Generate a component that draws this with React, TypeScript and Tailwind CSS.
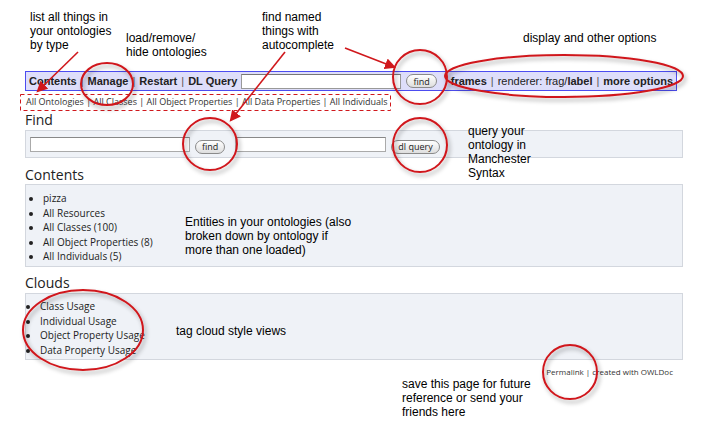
import React from "react";

const ui = { fontFamily: '"Open Sans", "DejaVu Sans", sans-serif' };
const bar = { fontFamily: '"Liberation Sans", Arial, sans-serif' };
const note = { fontFamily: '"Liberation Sans", Arial, sans-serif' };

function Sep() {
  return <span className="font-normal text-[#555] px-[4px]">|</span>;
}

function Button({ label }: { label: string }) {
  return (
    <span style={ui} className="inline-flex items-center h-[14px] px-[6px] rounded-full border border-[#8a8a8a] bg-gradient-to-b from-white to-[#dedede] text-[9px] font-normal leading-none text-[#222] whitespace-nowrap">
      {label}
    </span>
  );
}

function Box({ children, className }: { children: React.ReactNode; className?: string }) {
  return <div className={"border border-[#d3d7de] bg-[#eff2f7] " + (className || "")}>{children}</div>;
}

function Annotations() {
  return (
    <>
      <svg className="absolute inset-0 pointer-events-none" width={703} height={429}>
        <defs>
          <filter id="sh" x="-20%" y="-20%" width="150%" height="150%">
            <feDropShadow dx="2" dy="3" stdDeviation="2" floodColor="#000" floodOpacity="0.35" />
          </filter>
          <marker id="ah" viewBox="0 0 10 10" refX="8" refY="5" markerWidth="7" markerHeight="7" orient="auto">
            <path d="M0,0 L10,5 L0,10 z" fill="#d0181c" />
          </marker>
        </defs>
        {/* dashed frame round the type links */}
        <rect x="20.5" y="94.5" width="370" height="16" fill="none" stroke="#d0181c" strokeWidth="1" strokeDasharray="4 3" />
        <g fill="none" stroke="#d0181c" strokeWidth="2" filter="url(#sh)">
          <ellipse cx="107" cy="84" rx="26" ry="21" />
          <ellipse cx="420" cy="77" rx="27" ry="27" />
          <ellipse cx="564" cy="76" rx="119" ry="21" />
          <ellipse cx="210" cy="144" rx="27" ry="26" />
          <ellipse cx="420" cy="145" rx="27" ry="27" />
          <ellipse cx="83" cy="330" rx="60" ry="40" />
          <ellipse cx="570" cy="372" rx="27" ry="27" />
        </g>
        <g stroke="#d0181c" strokeWidth="1.6" markerEnd="url(#ah)">
          <line x1="78" y1="52" x2="38" y2="91" />
          <line x1="285" y1="52" x2="231" y2="120" />
          <line x1="345" y1="48" x2="394" y2="67" />
        </g>
      </svg>
      <div style={note} className="absolute inset-0 pointer-events-none text-[12px] leading-[14px] text-black">
        <div className="absolute left-[30px] top-[10px]">list all things in<br />your ontologies<br />by type</div>
        <div className="absolute left-[126px] top-[31px]">load/remove/<br />hide ontologies</div>
        <div className="absolute left-[262px] top-[10px]">find named<br />things with<br />autocomplete</div>
        <div className="absolute left-[523px] top-[31px]">display and other options</div>
        <div className="absolute left-[468px] top-[124px]">query your<br />ontology in<br />Manchester<br />Syntax</div>
        <div className="absolute left-[185px] top-[215px]">Entities in your ontologies (also<br />broken down by ontology if<br />more than one loaded)</div>
        <div className="absolute left-[176px] top-[324px]">tag cloud style views</div>
        <div className="absolute left-[402px] top-[377px]">save this page for future<br />reference or send your<br />friends here</div>
      </div>
    </>
  );
}

export default function App() {
  return (
    <div className="relative w-[703px] h-[429px] bg-white overflow-hidden">
      <div style={ui} className="pl-[25px] pt-[71px] w-[683px] text-[#222]">
        {/* top bar */}
        <div style={bar} className="w-[652px] h-[20px] border border-[#4c4cf0] bg-[#dedefa] flex items-center justify-between text-[11px] font-bold whitespace-nowrap">
          <div className="flex items-center pl-[3px]">
            <span>Contents</span><Sep /><span>Manage</span><Sep /><span>Restart</span><Sep /><span>DL Query</span>
            <span className="ml-[4px] w-[160px] h-[15px] bg-white border border-[#999] border-t-[#777]" />
            <span className="ml-[5px]"><Button label="find" /></span>
          </div>
          <div className="flex items-center pr-[3px]">
            <span>frames</span><Sep /><span className="font-normal">renderer: frag/</span><span>label</span><Sep /><span>more options</span>
          </div>
        </div>
        {/* type links */}
        <div className="mt-[4px] h-[14px] pl-[1px] text-[9px] leading-[14px] text-[#333] whitespace-nowrap">
          All Ontologies | All Classes | All Object Properties | All Data Properties | All Individuals
        </div>

        <h2 className="mt-[2px] h-[18px] text-[14px] leading-[18px]">Find</h2>
        <Box className="mt-[1px] h-[28px] flex items-center px-[4px]">
          <span className="w-[160px] h-[15px] bg-white border border-[#aaa] border-t-[#888]" />
          <span className="ml-[5px]"><Button label="find" /></span>
          <span className="ml-[10px] w-[151px] h-[15px] bg-white border border-[#aaa] border-t-[#888]" />
          <span className="ml-[5px]"><Button label="dl query" /></span>
        </Box>

        <h2 className="mt-[8px] h-[18px] text-[14px] leading-[18px]">Contents</h2>
        <Box className="h-[83px] pt-[6px] pl-[6px] text-[10px] leading-[14.5px]">
          <ul className="list-disc pl-[11px]">
            <li>pizza</li>
            <li>All Resources</li>
            <li>All Classes (100)</li>
            <li>All Object Properties (8)</li>
            <li>All Individuals (5)</li>
          </ul>
        </Box>

        <h2 className="mt-[7px] h-[18px] text-[14px] leading-[18px]">Clouds</h2>
        <Box className="mt-[1px] h-[67px] pt-[5px] pl-[3px] text-[10px] leading-[14.5px]">
          <ul className="list-disc pl-[11px]">
            <li>Class Usage</li>
            <li>Individual Usage</li>
            <li>Object Property Usage</li>
            <li>Data Property Usage</li>
          </ul>
        </Box>

        <div className="mt-[6px] pr-[10px] text-right text-[8px] leading-[12px] text-[#333]">
          Permalink | created with OWLDoc
        </div>
      </div>
      <Annotations />
    </div>
  );
}
